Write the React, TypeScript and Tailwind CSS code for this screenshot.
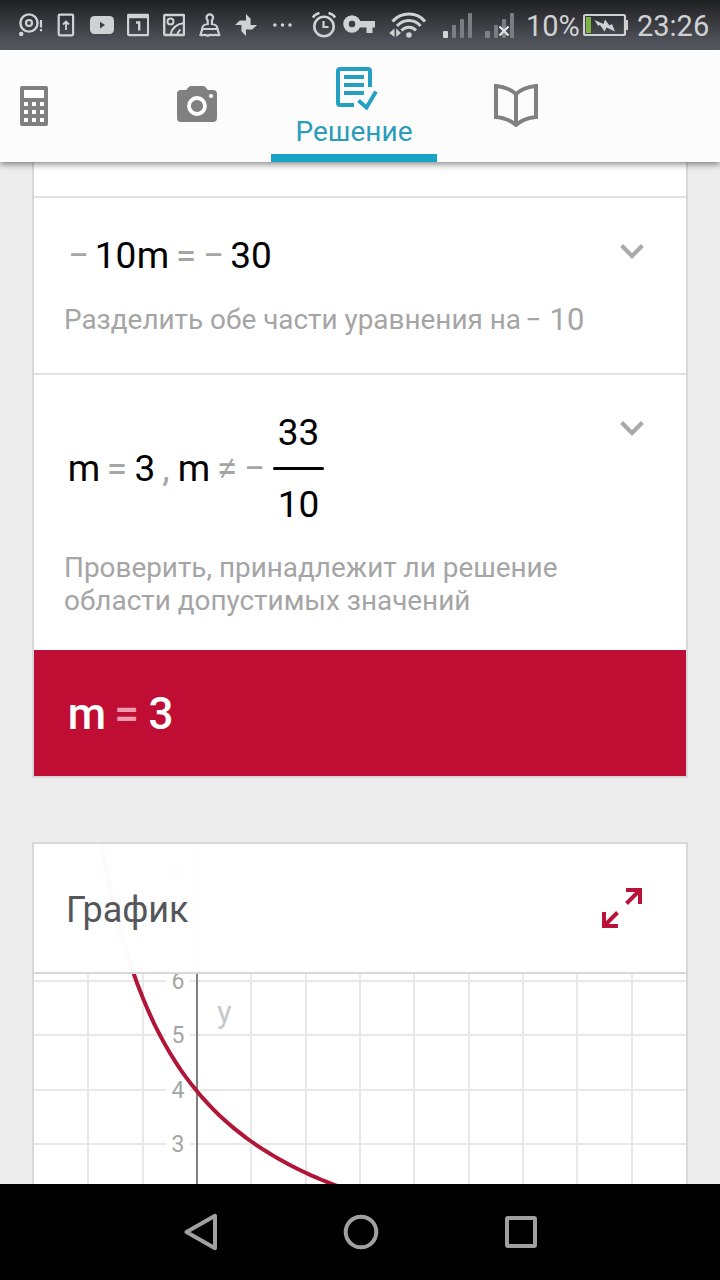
import type { ReactNode } from "react";

const gridX = [-2, -1, 1, 2, 3, 4, 5, 6, 7, 8];
const gridY = [3, 4, 5, 6, 8];

const UNIT = 54.35;
const AXIS_X = 163;

const toX = (x: number) => AXIS_X + x * UNIT;
const toY = (y: number) => 137 + (6 - y) * UNIT;

// y = 131 / (10x + 33)
const curve = Array.from({ length: 60 }, (_, i) => {
  const x = -2 + i * 0.1;
  return `${toX(x).toFixed(1)},${toY(131 / (10 * x + 33)).toFixed(1)}`;
}).join(" ");

// keeps a math token centered on its slot, whatever its advance width is
const Token = ({ className, children }: { className: string; children: ReactNode }) => (
  <span className={`flex shrink-0 justify-center whitespace-nowrap ${className}`}>{children}</span>
);

const Chevron = () => (
  <svg className="mt-[46px] h-[15px] w-6 shrink-0" viewBox="0 0 24 15" fill="none">
    <path d="M1.6 1.6L12 12L22.4 1.6" stroke="#a8a9aa" strokeWidth="4.2" />
  </svg>
);

const SignalBars = ({ first, className }: { first: string; className: string }) => (
  <svg className={`h-[50px] w-[30px] shrink-0 ${className}`} viewBox="0 0 30 50" fill="#7b7d82">
    <rect x="0" y="31" width="5" height="7" rx="1" fill={first} />
    <rect x="9" y="25" width="4" height="13" rx="1" />
    <rect x="17" y="19" width="4" height="19" rx="1" />
    <rect x="25" y="13" width="4" height="25" rx="1" />
    {first !== "#d4d5d6" && (
      <path d="M14.5 26.5L23.5 35.5M23.5 26.5L14.5 35.5" stroke="#e0e0e1" strokeWidth="2.4" />
    )}
  </svg>
);

const StatusBar = () => (
  <div className="flex h-[50px] items-center bg-linear-to-b from-[#1f2022] to-[#5a5d66] pl-[18px] text-[#d0d1d3]">
    <svg className="h-[50px] w-[25px] shrink-0" viewBox="0 0 25 50" fill="none" stroke="currentColor">
      <circle cx="11" cy="23" r="8.6" strokeWidth="2.4" />
      <circle cx="11" cy="23" r="3" strokeWidth="2.2" />
      <circle cx="3.2" cy="34" r="2.3" fill="currentColor" stroke="none" />
      <path d="M23 20v7.5M23 29v2.3" strokeWidth="2.2" />
    </svg>
    <svg className="ml-[14px] h-[50px] w-[18px] shrink-0" viewBox="0 0 18 50" fill="none" stroke="currentColor">
      <rect x="1.7" y="14.7" width="14.4" height="20.6" rx="1" strokeWidth="2.2" />
      <path d="M9 30v-8M6 24.5l3-3 3 3" strokeWidth="1.8" />
    </svg>
    <svg className="ml-[15px] h-[50px] w-6 shrink-0" viewBox="0 0 24 50">
      <rect x="0" y="16" width="24" height="18" rx="4.5" fill="currentColor" />
      <path d="M10 21.8v6.6l5-3.3z" fill="#3c3e43" />
    </svg>
    <svg className="ml-[13px] h-[50px] w-[22px] shrink-0" viewBox="0 0 22 50" fill="none" stroke="currentColor">
      <rect x="1.1" y="15" width="20" height="20.2" rx="1" strokeWidth="2.2" />
      <path d="M0.5 16h21" strokeWidth="4.5" />
      <path d="M9 22.5h3.2v8" strokeWidth="2.4" />
    </svg>
    <svg className="ml-[14px] h-[50px] w-[22px] shrink-0" viewBox="0 0 22 50" fill="none" stroke="currentColor">
      <rect x="1.2" y="15" width="19.8" height="20" rx="1" strokeWidth="2.4" />
      <circle cx="7.5" cy="21.5" r="3" strokeWidth="2" />
      <path d="M7.5 35C8.5 29 13 24 21 23M14 35c.5-2 1.500-4 3.500-5.500" strokeWidth="2" />
    </svg>
    <svg className="ml-[14px] h-[50px] w-[22px] shrink-0" viewBox="0 0 22 50" fill="none" stroke="currentColor" strokeWidth="2.2">
      <path d="M8.7 24V20.5C8 19.5 7.5 18.5 7.5 17.7a3.3 3.3 0 0 1 6.6 0c0 .8-.5 1.8-1.2 2.8V24c4 .5 5.5 1.5 5.5 5H3.2c0-3.5 1.5-4.5 5.5-5z" />
      <path d="M3.2 29L1.5 35c2 .8 3.5-.8 5 0s3 .8 4.300 0 3 .8 4.500 0 3 .8 5 0l-1.800-6" />
    </svg>
    <svg className="ml-[14px] h-[50px] w-[22px] shrink-0" viewBox="0 0 22 50" fill="currentColor">
      <path d="M11 25V14l4.6 4.8V25zM11 25h11l-4.8 4.600H11zM11 25v11l-4.600-4.800V25zM11 25H0l4.800-4.600H11z" />
    </svg>
    <svg className="ml-4 h-[50px] w-5 shrink-0" viewBox="0 0 20 50" fill="currentColor">
      <circle cx="1.9" cy="25" r="1.800" />
      <circle cx="9.5" cy="25" r="1.800" />
      <circle cx="17" cy="25" r="1.800" />
    </svg>
    <svg className="ml-[19px] h-[50px] w-6 shrink-0" viewBox="0 0 24 50" fill="none" stroke="currentColor">
      <circle cx="12" cy="26.5" r="9.700" strokeWidth="2.600" />
      <path d="M11.5 21v6h5" strokeWidth="2.200" />
      <path d="M0.8 17.500Q3 14 7.500 13M23.200 17.500Q21 14 16.500 13" strokeWidth="2.400" />
    </svg>
    <svg className="ml-[7px] h-[50px] w-8 shrink-0" viewBox="0 0 32 50">
      <circle cx="9" cy="24" r="6" fill="none" stroke="currentColor" strokeWidth="5.500" />
      <path d="M16 21h16v6.500h-2.500V33h-6v-5.500H16z" fill="currentColor" />
    </svg>
    <svg className="ml-[14px] h-[50px] w-[38px] shrink-0" viewBox="0 0 38 50" fill="none" stroke="currentColor">
      <path d="M3.5 21.500C12 11.500 28 11.500 36 21.500M8 26C14.500 18.500 25.500 18.500 31.500 26M12.500 30.500C16.500 26 23.500 26 27 30.500" strokeWidth="3" />
      <circle cx="20" cy="35" r="2.800" fill="currentColor" stroke="none" />
      <path d="M5.5 28.500v8.500L0.300 33zM7.200 28.500v8.500l4.800-4z" fill="currentColor" stroke="none" />
    </svg>
    <SignalBars first="#d4d5d6" className="ml-4" />
    <SignalBars first="#808287" className="ml-3" />
    <span className="ml-[11px] w-[54px] whitespace-nowrap pt-[2px] text-[29px] leading-[50px]">10%</span>
    <svg className="ml-[3px] mr-[9px] h-[50px] w-[45px] shrink-0" viewBox="0 0 45 50">
      <rect x="1" y="15" width="41" height="20" rx="1.5" fill="none" stroke="currentColor" strokeWidth="2.2" />
      <rect x="42" y="20" width="3" height="10" fill="currentColor" />
      <rect x="3" y="17" width="5" height="16" fill="#7cb342" />
      <path d="M11.5 20l9 4 1.5-4.5 4.500 6 2.500-1.500 3 7.500-8.500-4-2 4-4.500-6.500-2 .8z" fill="currentColor" />
    </svg>
    <span className="whitespace-nowrap pt-[2px] text-[29px] leading-[50px]">23:26</span>
  </div>
);

const TabBar = () => (
  <div className="relative z-10 flex h-28 bg-[#fcfcfc] text-[#808080] shadow-[0_2px_7px_rgba(0,0,0,0.5)]">
    <div className="flex w-[123px] items-center pl-5">
      <svg className="h-10 w-7" viewBox="0 0 28 40">
        <rect width="28" height="40" rx="2" fill="currentColor" />
        <path d="M4 4h20v8H4zM4 16h4v4H4zM12 16h4v4h-4zM20 16h4v4h-4zM4 24h4v4H4zM12 24h4v4h-4zM20 24h4v4h-4zM4 32h4v4H4zM12 32h4v4h-4zM20 32h4v4h-4z" fill="#fff" />
      </svg>
    </div>
    <div className="flex w-[148px] justify-center pt-9">
      <svg className="h-9 w-10" viewBox="0 0 40 36">
        <path d="M4 4h5l3-3.2Q13 0 14 0h12q1 0 2 .8L31 4h5q4 0 4 4v24q0 4-4 4H4q-4 0-4-4V8q0-4 4-4z" fill="currentColor" />
        <circle cx="20" cy="20" r="8" fill="none" stroke="#fff" strokeWidth="3.8" />
        <circle cx="34" cy="10" r="2.1" fill="#fff" />
      </svg>
    </div>
    <div className="flex w-[166px] flex-col items-center border-b-8 border-[#19a3c6] pt-[17px] text-[#2b9dba]">
      <svg className="ml-[6px] h-11 w-[42px]" viewBox="0 0 42 44" fill="none" stroke="#26a0c2" strokeWidth="4">
        <path d="M34 20V4q0-2-2-2H4Q2 2 2 4v32q0 2 2 2h14" />
        <path d="M8 10h20M8 18h20M8 26h20" />
        <path d="M22.5 33.5l8 7L40 24.5" />
      </svg>
      <span className="mt-1 text-[28px] leading-[34px]">Решение</span>
    </div>
    <div className="flex w-[158px] justify-center pt-[33px]">
      <svg className="h-11 w-11" viewBox="0 0 44 44" fill="none" stroke="currentColor" strokeWidth="4">
        <path d="M2 3q12 1 20 8q8-7 20-8v31q-12 1-20 8q-8-7-20-8zM22 11v31" />
      </svg>
    </div>
  </div>
);

const NavBar = () => (
  <div className="flex h-24 items-center bg-black pl-[184px]">
    <svg className="h-10 w-[34px]" viewBox="0 0 34 40" fill="none" stroke="#a0a0a0" strokeWidth="4" strokeLinejoin="round">
      <path d="M31 3.8v32.400L2.500 20z" />
    </svg>
    <svg className="ml-[125px] h-9 w-9" viewBox="0 0 36 36" fill="none" stroke="#a0a0a0" strokeWidth="4">
      <circle cx="18" cy="18" r="15.3" />
    </svg>
    <svg className="ml-[126px] h-8 w-8" viewBox="0 0 32 32" fill="none" stroke="#a0a0a0" strokeWidth="4">
      <rect x="2" y="2" width="28" height="28" rx="1" />
    </svg>
  </div>
);

const GraphCard = () => (
  <div className="mt-16 grid h-[342px] grid-rows-[130px_1fr] border-2 border-b-0 border-[#d8d8d8] bg-white">
    <svg className="col-start-1 row-span-2 row-start-1 h-[340px] w-[652px]" viewBox="0 0 652 340">
      <g stroke="#e8e8e8" strokeWidth="2">
        {gridX.map((x) => (
          <path key={x} d={`M${Math.round(toX(x))} 0V340`} />
        ))}
        {gridY.map((y) => (
          <path key={y} d={`M0 ${Math.round(toY(y))}H132M156 ${Math.round(toY(y))}H652`} />
        ))}
      </g>
      <path d={`M${AXIS_X} 0V340`} stroke="#808080" strokeWidth="2" />
      <g fill="#a3a5a6" fontSize="23">
        {gridY.map((y) => (
          <text key={y} x="137.5" y={toY(y) + 8}>
            {y}
          </text>
        ))}
      </g>
      <text x="183" y="179" fill="#c8c8c8" fontSize="31">
        y
      </text>
      <polyline points={curve} fill="none" stroke="#b01638" strokeWidth="4" />
    </svg>
    <div className="z-10 col-start-1 row-start-1 flex justify-between border-b-2 border-[#d8d8d8] bg-white/[.98] pl-8 pr-11 text-[#55565a]">
      <h2 className="pt-11 text-[36px] leading-[44px]">График</h2>
      <svg className="mt-11 h-10 w-10" viewBox="0 0 40 40" fill="none" stroke="#b8143b" strokeWidth="4">
        <path d="M24 2h14v14M38 2L24.5 15.5M16 38H2V24M2 38L15.500 24.500" />
      </svg>
    </div>
  </div>
);

const App = () => {
  return (
    <div className="flex h-[1280px] w-[720px] flex-col overflow-hidden bg-[#ededed] font-[Roboto,sans-serif]">
      <StatusBar />
      <TabBar />
      <div className="h-[1022px] overflow-hidden px-8">
        <div className="border-2 border-t-0 border-[#d8d8d8] bg-white">
          <div className="h-9 border-b-2 border-[#e2e2e2]" />
          <div className="flex h-[177px] justify-between border-b-2 border-[#e2e2e2] pl-[30px] pr-[42px]">
            <div className="pt-9 text-[#a5a5a5]">
              <div className="flex h-11 items-center pl-[7px] text-[37px] leading-[44px]">
                <Token className="w-[15px]">−</Token>
                <Token className="ml-[9px] w-[41px] text-black">10</Token>
                <Token className="ml-[3px] w-7 text-black">m</Token>
                <Token className="ml-[11px] w-4">=</Token>
                <Token className="ml-3 w-[15px]">−</Token>
                <Token className="ml-[10px] w-10 text-black">30</Token>
              </div>
              <div className="mt-[25px] flex whitespace-nowrap text-[27.9px] leading-[33px]">
                <span className="w-[454px]">Разделить обе части уравнения на</span>
                <Token className="ml-2 w-[15px]">−</Token>
                <Token className="ml-2 w-9 text-[31px]">10</Token>
              </div>
            </div>
            <Chevron />
          </div>
          <div className="flex h-[275px] justify-between pl-[30px] pr-[42px]">
            <div className="pt-[35px] text-[#a5a5a5]">
              <div className="flex items-center pl-[6px] text-[37px] leading-[44px]">
                <Token className="w-7 text-black">m</Token>
                <Token className="ml-[11px] w-4">=</Token>
                <Token className="ml-[11px] w-[18px] text-black">3</Token>
                <Token className="ml-[9px] w-[6px]">,</Token>
                <Token className="ml-[11px] w-7 text-black">m</Token>
                <Token className="ml-[11px] w-4">≠</Token>
                <Token className="ml-3 w-[15px]">−</Token>
                <div className="ml-[11px] flex w-[51px] flex-col items-center gap-3 text-black">
                  <span className="pt-px">33</span>
                  <span className="h-[3px] w-full rounded-full bg-black" />
                  <span className="pt-px">10</span>
                </div>
              </div>
              <p className="mt-6 whitespace-nowrap text-[27.9px] leading-[33px]">
                Проверить, принадлежит ли решение
                <br />
                области допустимых значений
              </p>
            </div>
            <Chevron />
          </div>
          <div className="flex h-[126px] items-center bg-[#bf0d33] pl-9 pt-[2px] text-[44px] font-medium leading-none text-white">
            <Token className="w-[34px]">m</Token>
            <Token className="ml-[13px] w-[19px] text-[#ee9bb0]">=</Token>
            <Token className="ml-[14px] w-[22px]">3</Token>
          </div>
        </div>
        <GraphCard />
      </div>
      <NavBar />
    </div>
  );
};

export default App;
